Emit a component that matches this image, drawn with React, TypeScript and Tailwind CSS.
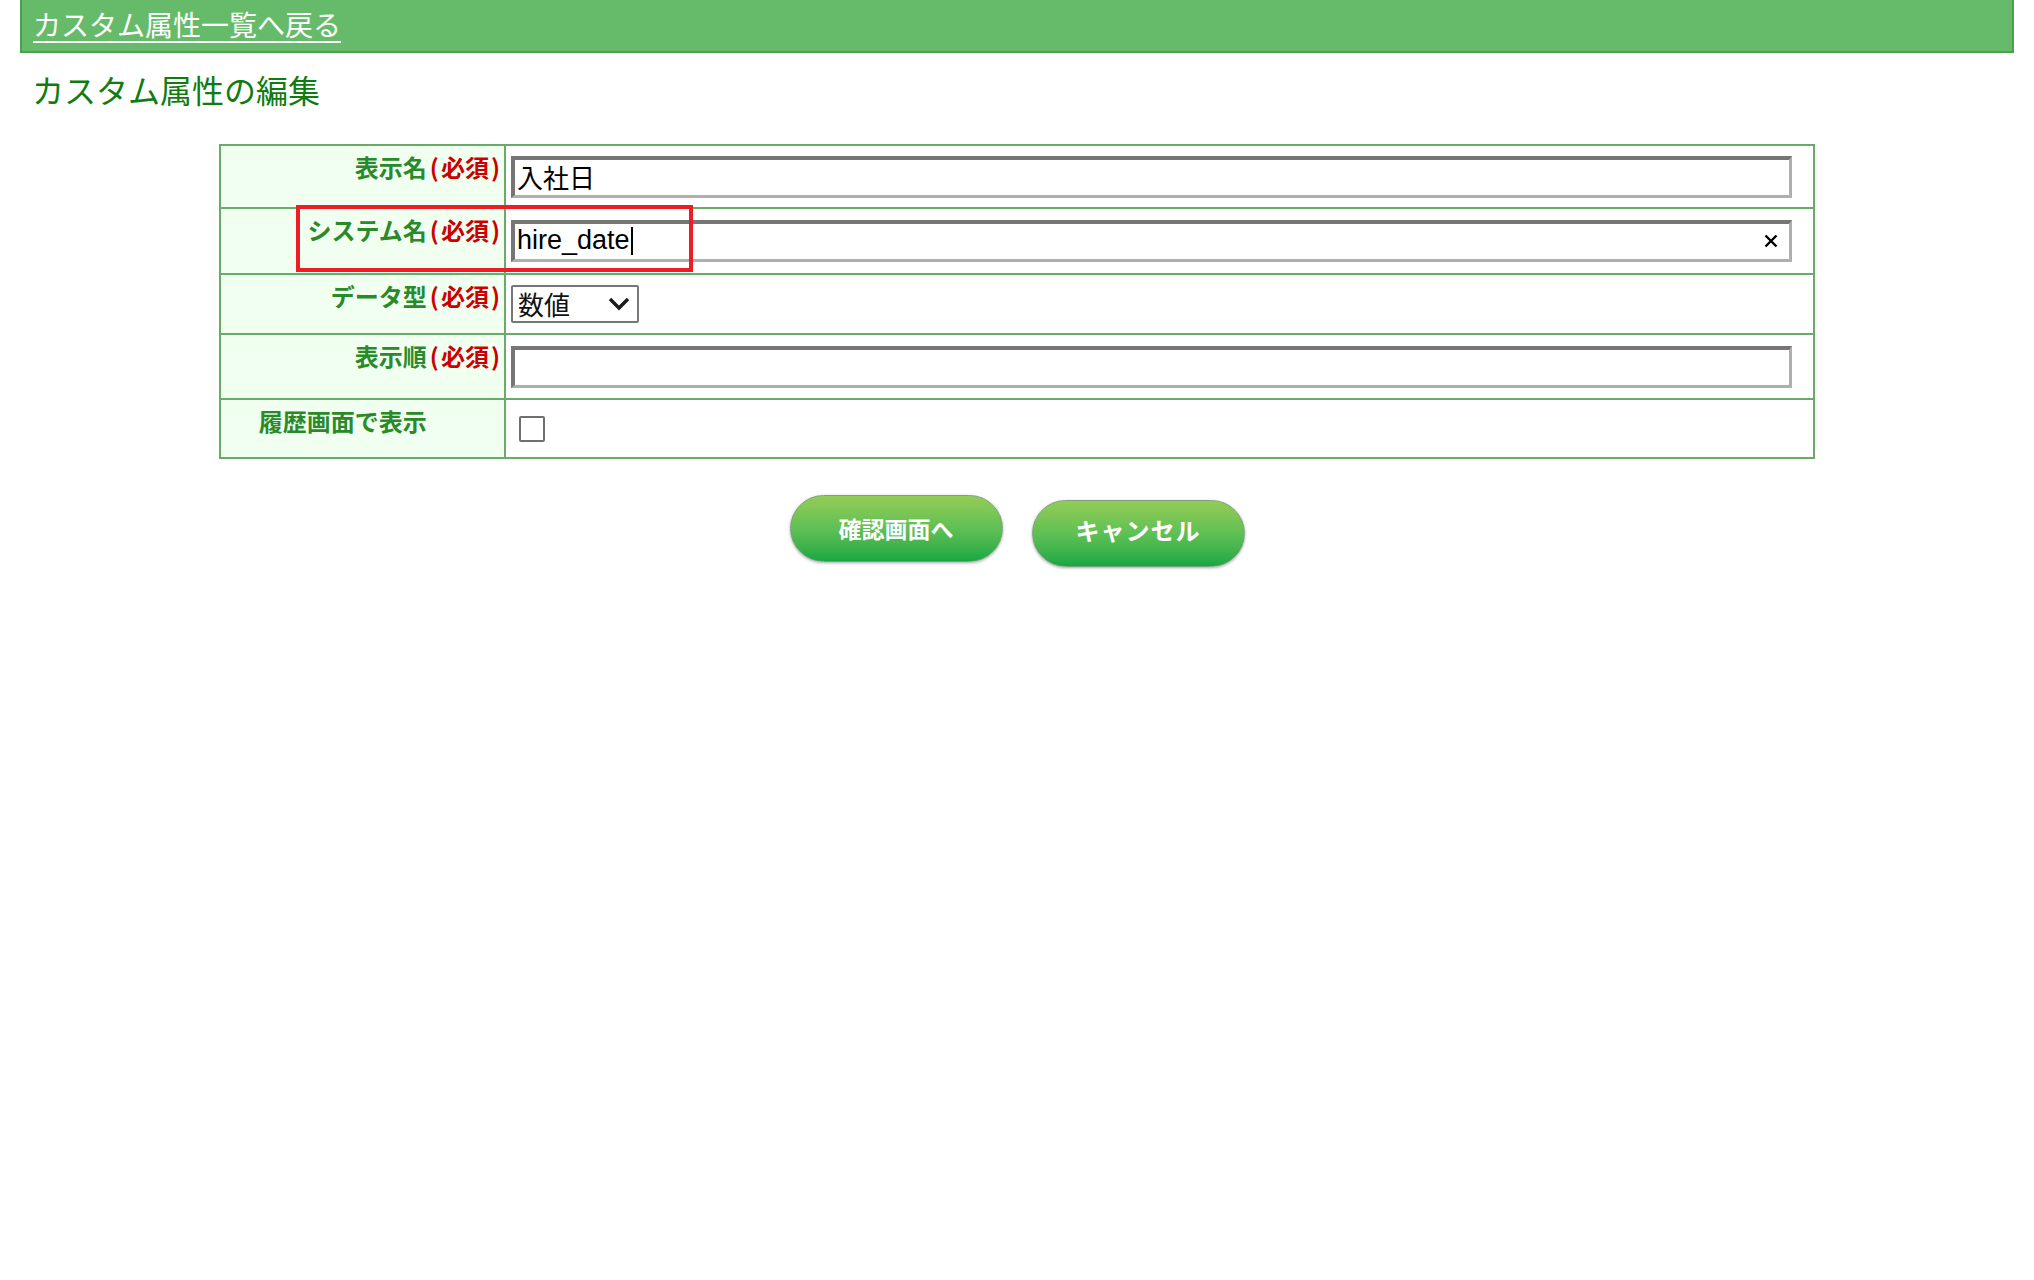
import React from 'react';

const labelCls =
  'w-[285px] bg-[#f0fff0] border-2 border-[#6aab6a] text-right align-top pt-[5px] pr-[4px] text-[24px] font-bold leading-[32px] text-[#2a8a2a] whitespace-nowrap';
const cellCls = 'border-2 border-[#6aab6a] pl-[5px] align-middle';
const inputCls =
  "w-[1281px] h-[42px] border-t-4 border-l-4 border-r-[3px] border-b-[3px] border-t-[#767676] border-l-[#767676] border-r-[#afafaf] border-b-[#afafaf] bg-white pl-[2px] pb-[2px] text-[26px] text-black outline-none font-['Liberation_Sans','Noto_Sans_CJK_JP',sans-serif]";
const btnCls =
  'w-[213px] h-[67px] rounded-full border border-[#7f9f7f] bg-gradient-to-b from-[#93cc56] via-[#5ec055] to-[#10a844] text-white font-bold shadow-[0_1px_3px_rgba(0,0,0,0.35)]';

function Required({ hidden }: { hidden?: boolean }) {
  return (
    <span className={`text-[#cc0000] ${hidden ? 'invisible' : ''}`}>
      <span className="ml-[3px] mr-[2px]">(</span>必須<span className="ml-[2px]">)</span>
    </span>
  );
}

export default function App() {
  return (
    <div className="min-h-screen bg-white px-[20px] font-['Noto_Sans_CJK_JP',sans-serif]">
      {/* back link bar */}
      <div className="h-[53px] bg-[#66bb6a] border-l-2 border-r-2 border-b-2 border-[#4aa04e] pl-[11px] pb-[3px] flex items-center">
        <a href="#" className="text-white underline underline-offset-[5px] decoration-[2px] text-[28px] leading-none">
          カスタム属性一覧へ戻る
        </a>
      </div>

      <h1 className="mt-[16px] pl-[12px] text-[32px] leading-[40px] font-normal text-[#107c10]">カスタム属性の編集</h1>

      <div className="relative mx-auto mt-[35px] w-[1596px]">
        <table className="w-full border-collapse border-2 border-[#6aab6a]">
          <tbody>
            <tr className="h-[63px]">
              <th className={labelCls}>
                表示名<Required />
              </th>
              <td className={cellCls}>
                <input className={inputCls} defaultValue="入社日" readOnly />
              </td>
            </tr>
            <tr className="h-[66px]">
              <th className={labelCls}>
                システム名<Required />
              </th>
              <td className={cellCls}>
                <div className="w-[1281px] h-[42px] flex items-center border-t-4 border-l-4 border-r-[3px] border-b-[3px] border-t-[#767676] border-l-[#767676] border-r-[#afafaf] border-b-[#afafaf] bg-white pl-[2px] pr-[11px] pb-[2px] text-[27px] text-black font-['Liberation_Sans',sans-serif]">
                  <span>hire_date</span>
                  <span className="w-[2px] h-[28px] bg-black ml-[1px]" />
                  <span className="ml-auto">
                    <svg width="14" height="14" viewBox="0 0 14 14">
                      <path d="M1.5 1.5 L12.5 12.5 M12.5 1.5 L1.5 12.5" stroke="#000" strokeWidth="2.4" />
                    </svg>
                  </span>
                </div>
              </td>
            </tr>
            <tr className="h-[60px]">
              <th className={labelCls}>
                データ型<Required />
              </th>
              <td className={cellCls}>
                <div className="w-[128px] h-[38px] border-2 border-[#767676] rounded-[2px] bg-white flex items-center pl-[5px] pr-[7px] text-[26px] text-[#111]">
                  <span className="leading-none">数値</span>
                  <svg className="ml-auto" width="22" height="14" viewBox="0 0 22 14">
                    <polyline points="2,2 11,11 20,2" fill="none" stroke="#1a1a1a" strokeWidth="3.4" />
                  </svg>
                </div>
              </td>
            </tr>
            <tr className="h-[65px]">
              <th className={labelCls}>
                表示順<Required />
              </th>
              <td className={cellCls}>
                <input className={inputCls} defaultValue="" readOnly />
              </td>
            </tr>
            <tr className="h-[59px]">
              <th className={labelCls}>
                履歴画面で表示<Required hidden />
              </th>
              <td className={cellCls}>
                <div className="ml-[8px] w-[26px] h-[26px] border-2 border-[#6f6f6f] rounded-[2px] bg-white" />
              </td>
            </tr>
          </tbody>
        </table>

        {/* highlight annotation */}
        <div className="absolute left-[77px] top-[61px] w-[397px] h-[67px] border-4 border-[#ee1c24] pointer-events-none" />
      </div>

      <div className="mt-[36px] flex justify-center items-start gap-[29px]">
        <button className={`${btnCls} text-[23px]`}>確認画面へ</button>
        <button className={`${btnCls} mt-[5px] pb-[7px] text-[24px] tracking-[1px]`}>キャンセル</button>
      </div>
    </div>
  );
}
